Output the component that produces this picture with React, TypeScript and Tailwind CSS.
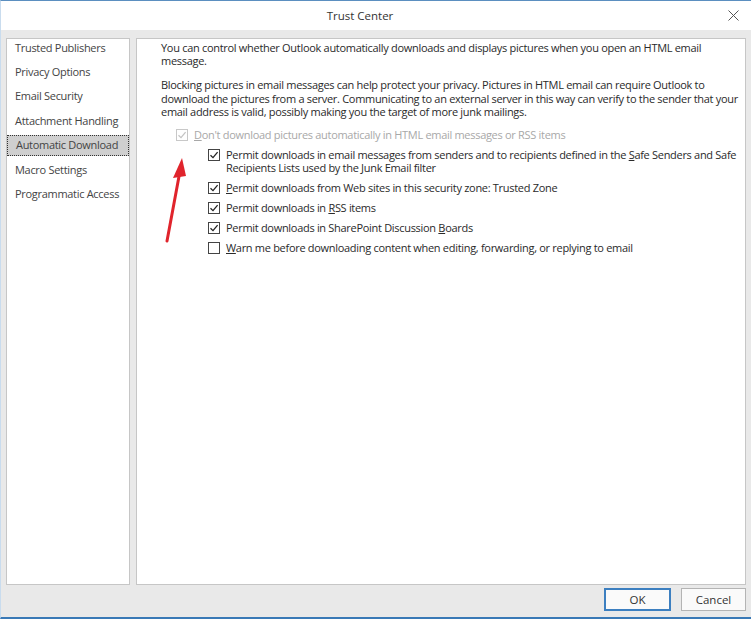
import React from "react";

const NAV = [
  "Trusted Publishers",
  "Privacy Options",
  "Email Security",
  "Attachment Handling",
  "Automatic Download",
  "Macro Settings",
  "Programmatic Access",
];

function Box({ checked, disabled }: { checked: boolean; disabled?: boolean }) {
  return (
    <span
      className={`mt-[2px] flex h-[12px] w-[12px] shrink-0 items-center justify-center border bg-white ${
        disabled ? "border-[#c8c8c8]" : "border-[#444]"
      }`}
    >
      {checked && (
        <svg width="10" height="10" viewBox="0 0 10 10">
          <path
            d="M1.5 5.2 L4 7.6 L8.6 2.2"
            fill="none"
            stroke={disabled ? "#c4c4c4" : "#222"}
            strokeWidth="1.3"
          />
        </svg>
      )}
    </span>
  );
}

function Option({
  checked,
  disabled,
  children,
}: {
  checked: boolean;
  disabled?: boolean;
  children: React.ReactNode;
}) {
  return (
    <div className={`flex gap-[6px] leading-[13px] ${disabled ? "text-[#a8a8a8]" : "text-[#2a2a2a]"}`}>
      <Box checked={checked} disabled={disabled} />
      <span className="whitespace-nowrap pt-[1px]">{children}</span>
    </div>
  );
}

export default function App() {
  return (
    <div
      className="relative flex h-[619px] w-[751px] flex-col border-t border-b-[2px] border-l border-t-[#5b8fc0] border-b-[#3a79b6] border-l-[#c9dcee] bg-[#e9e9e9] text-[11px] text-[#2a2a2a]"
      style={{ fontFamily: '"Open Sans", "Noto Sans", sans-serif' }}
    >
      {/* title bar */}
      <div className="relative flex h-[29px] shrink-0 items-center justify-center bg-white pr-[32px] text-[11.5px] text-[#333]">
        Trust Center
        <svg
          className="absolute right-[12px] top-[9px]"
          width="11"
          height="11"
          viewBox="0 0 11 11"
        >
          <path d="M0.5 0.5 L10.5 10.5 M10.5 0.5 L0.5 10.5" stroke="#555" strokeWidth="1" />
        </svg>
      </div>

      <div className="flex flex-1 flex-col px-[5px] pt-[8px]">
        <div className="flex h-[547px] gap-[6px]">
          {/* nav */}
          <div className="flex w-[124px] shrink-0 flex-col gap-[3.4px] overflow-hidden border border-[#c6c6c6] bg-white tracking-[-0.3px]">
            <div className="-mt-[5px]" />
            {NAV.map((n) => (
              <div
                key={n}
                className={`flex h-[21px] shrink-0 items-center whitespace-nowrap pl-[8px] text-[#444] ${
                  n === "Automatic Download"
                    ? "border border-dotted border-[#333] bg-[#cfcfcf] pl-[7px] text-[#222]"
                    : ""
                }`}
              >
                {n}
              </div>
            ))}
          </div>

          {/* content */}
          <div className="min-w-0 flex-1 overflow-hidden border border-[#c6c6c6] bg-white pl-[24px] pt-[2px] tracking-[-0.3px]">
            <p className="whitespace-nowrap leading-[13px]">
              You can control whether Outlook automatically downloads and displays pictures when you open an HTML email
              <br />
              message.
            </p>
            <p className="mt-[11px] whitespace-nowrap leading-[13.5px]">
              Blocking pictures in email messages can help protect your privacy. Pictures in HTML email can require Outlook to
              <br />
              download the pictures from a server. Communicating to an external server in this way can verify to the sender that your
              <br />
              email address is valid, possibly making you the target of more junk mailings.
            </p>

            <div className="mt-[8px] pl-[15px]">
              <Option checked disabled>
                <u>D</u>on't download pictures automatically in HTML email messages or RSS items
              </Option>
              <div className="mt-[6px] flex flex-col gap-[6px] pl-[32px]">
                <Option checked>
                  Permit downloads in email messages from senders and to recipients defined in the <u>S</u>afe Senders and Safe
                  <br />
                  Recipients Lists used by the Junk Email filter
                </Option>
                <Option checked>
                  <u>P</u>ermit downloads from Web sites in this security zone: Trusted Zone
                </Option>
                <Option checked>
                  Permit downloads in <u>R</u>SS items
                </Option>
                <Option checked>
                  Permit downloads in SharePoint Discussion <u>B</u>oards
                </Option>
                <Option checked={false}>
                  <u>W</u>arn me before downloading content when editing, forwarding, or replying to email
                </Option>
              </div>
            </div>
          </div>
        </div>

        {/* buttons */}
        <div className="mt-[3px] flex justify-end gap-[10px]">
          <button className="h-[23px] w-[67px] border border-[#3c7fc0] bg-[#fafafa] text-[11.5px] text-[#333] outline outline-1 outline-[#3c7fc0] -outline-offset-2">
            OK
          </button>
          <button className="h-[23px] w-[65px] border border-[#b4b4b4] bg-[#fafafa] text-[11.5px] text-[#333]">
            Cancel
          </button>
        </div>
      </div>

      {/* red annotation arrow */}
      <svg className="absolute left-[155px] top-[150px]" width="40" height="100" viewBox="0 0 40 100">
        <path d="M11 90 L24 20" stroke="#e0242c" strokeWidth="3" strokeLinecap="round" />
        <path d="M26 7 L17 27 L30 25 Z" fill="#e0242c" />
      </svg>
    </div>
  );
}
